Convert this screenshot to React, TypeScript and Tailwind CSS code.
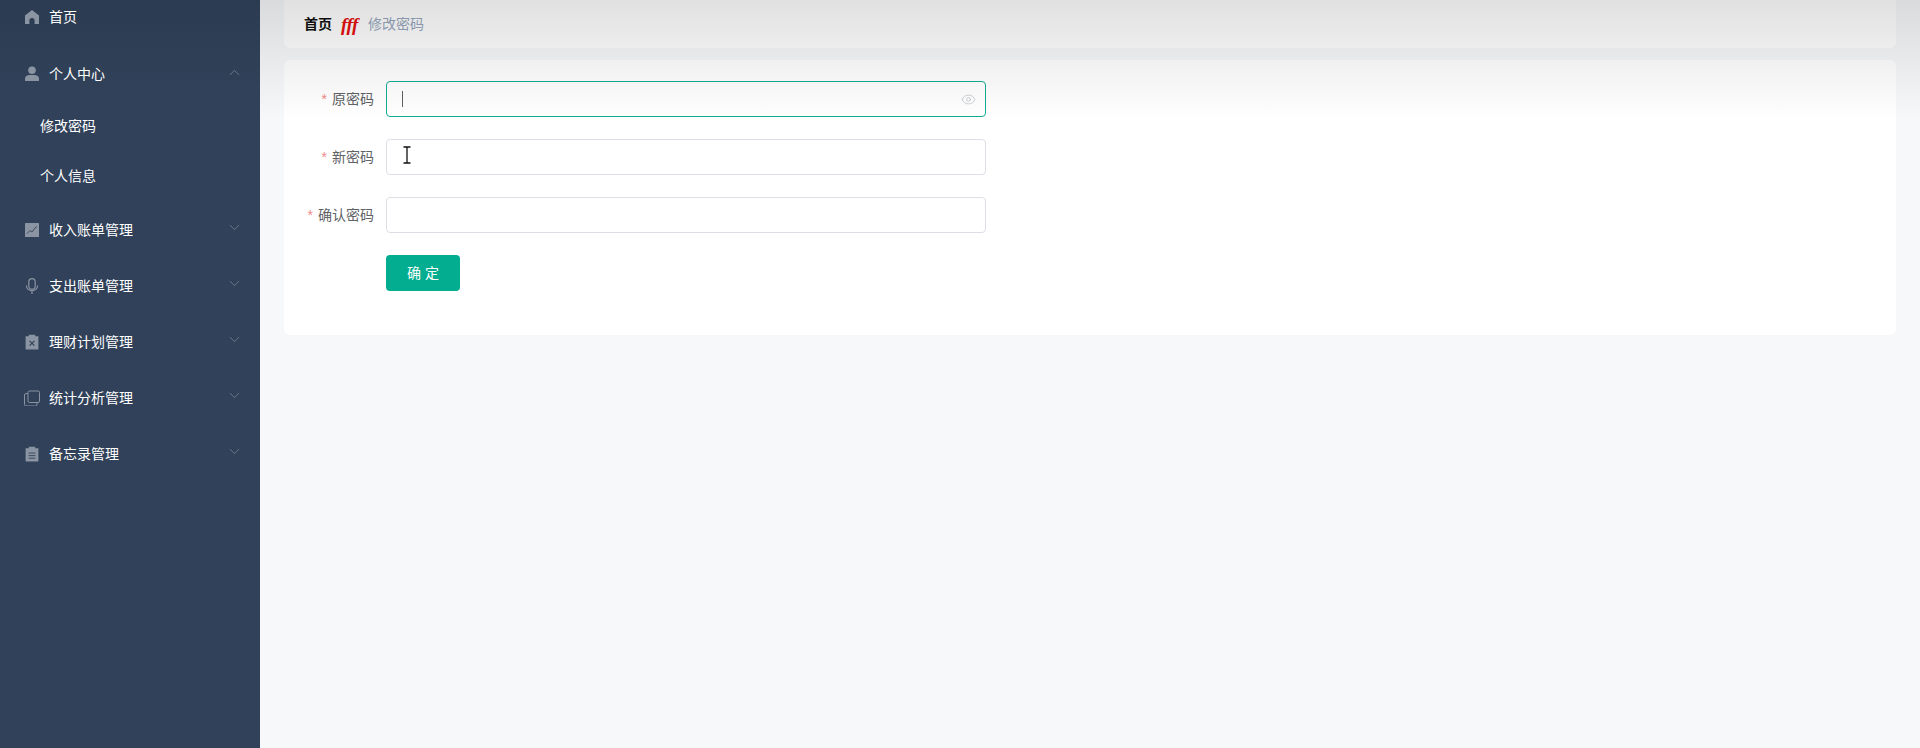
import { ChevronDown, ChevronUp, Eye } from "lucide-react";
import type { ReactNode } from "react";

const font = "font-['Liberation_Sans','Noto_Sans_CJK_SC',sans-serif]";

const HomeIcon = () => (
  <svg viewBox="0 0 16 16" className="h-[16px] w-[16px] fill-[#8a94a3]">
    <path d="M8 1 15 6.6V15h-4.4v-3.4a2.6 2.6 0 0 0-5.2 0V15H1V6.6z" />
  </svg>
);

const UserIcon = () => (
  <svg viewBox="0 0 16 16" className="h-[16px] w-[16px] fill-[#8a94a3]">
    <circle cx="8" cy="4.2" r="3.8" />
    <path d="M1 15v-2.4C1 10.2 3.2 9 5.5 9h5c2.3 0 4.5 1.2 4.5 3.6V15z" />
  </svg>
);

const ChartIcon = () => (
  <svg viewBox="0 0 16 16" className="h-[16px] w-[16px]">
    <rect x="1" y="1" width="14" height="14" rx="0.5" fill="#8a94a3" />
    <path d="M3 11.5 6 8.5l2 1.5 3-4 2-1.5" fill="none" stroke="#3e4c60" strokeWidth="1" />
  </svg>
);

const MicIcon = () => (
  <svg viewBox="0 0 16 16" className="h-[16px] w-[16px] fill-none stroke-[#8a94a3]" strokeWidth="1.2">
    <rect x="4.8" y="0.6" width="6.4" height="10.6" rx="3.2" />
    <path d="M2.4 7.6c0 6.6 11.2 6.6 11.2 0M8 12.6V16" />
  </svg>
);

const ClipboardXIcon = () => (
  <svg viewBox="0 0 16 16" className="h-[16px] w-[16px]">
    <path d="M1.6 2.2h3.2V.8h6.4v1.4h3.2V15.4H1.6z" fill="#8a94a3" />
    <path d="M5.6 6.8 10.4 11.6M10.4 6.8 5.6 11.6" stroke="#34445a" strokeWidth="1.2" />
  </svg>
);

const CopyIcon = () => (
  <svg viewBox="0 0 16 16" className="h-[16px] w-[16px] fill-none stroke-[#8a94a3]" strokeWidth="1">
    <rect x="4" y="1" width="11.5" height="11.5" rx="1.5" />
    <path d="M4 3.6H2A1.5 1.5 0 0 0 .5 5.1v9.4A1.5 1.5 0 0 0 2 16h9.5a1.5 1.5 0 0 0 1.5-1.5v-2" />
  </svg>
);

const NoteIcon = () => (
  <svg viewBox="0 0 16 16" className="h-[16px] w-[16px]">
    <path d="M1.6 2.2h3.2V.8h6.4v1.4h3.2V15.4H1.6z" fill="#8a94a3" />
    <path d="M4.6 7h6.8M4.6 9.6h6.8M4.6 12.2h6.8" stroke="#34445a" strokeWidth="0.9" />
  </svg>
);

function MenuItem({ icon, label, open, arrow = true }: { icon: ReactNode; label: string; open?: boolean; arrow?: boolean }) {
  return (
    <div className="flex h-[56px] items-center pl-[24px] pr-[17px] text-[14px] text-white">
      <span className="mr-[9px] flex w-[16px] justify-center">{icon}</span>
      <span className="flex-1">{label}</span>
      {arrow &&
        (open ? (
          <ChevronUp size={17} strokeWidth={0.9} className="-mt-[3px] text-[#8a94a3]" />
        ) : (
          <ChevronDown size={17} strokeWidth={0.9} className="-mt-[5px] text-[#8a94a3]" />
        ))}
    </div>
  );
}

function SubItem({ label }: { label: string }) {
  return <div className="flex h-[50px] items-center pl-[40px] text-[14px] text-white">{label}</div>;
}

function Field({ label, focused }: { label: string; focused?: boolean }) {
  return (
    <div className="mb-[22px] flex h-[36px] items-center">
      <label className="w-[90px] pr-[12px] text-right text-[14px] text-[#606266]">
        <span className="mr-[5px] text-[#f08a8a]">*</span>
        {label}
      </label>
      <div
        className={
          focused
            ? "flex h-[36px] w-[600px] items-center justify-between rounded-[4px] border border-[#12ad95] bg-white pl-[15px] pr-[9px]"
            : "h-[36px] w-[600px] rounded-[4px] border border-[#dcdfe6] bg-white"
        }
      >
        {focused && (
          <>
            <span className="h-[16px] w-px bg-[#606266]" />
            <Eye size={15} strokeWidth={1.3} className="text-[#c0c4cc]" />
          </>
        )}
      </div>
    </div>
  );
}

export default function App() {
  return (
    <div className={`relative flex h-[748px] overflow-hidden bg-[#f7f8fa] ${font}`}>
      <aside className="relative h-full w-[260px] shrink-0 bg-[#304159]">
        <div className="absolute inset-x-0 top-0 h-[90px] bg-gradient-to-b from-[#1f2a38]/25 to-transparent" />
        <div className="relative -mt-[11px]">
          <div className="mb-px">
            <MenuItem icon={<HomeIcon />} label="首页" arrow={false} />
          </div>
          <MenuItem icon={<UserIcon />} label="个人中心" open />
          <div className="-mt-px mb-px">
            <SubItem label="修改密码" />
            <SubItem label="个人信息" />
          </div>
          <MenuItem icon={<ChartIcon />} label="收入账单管理" />
          <MenuItem icon={<MicIcon />} label="支出账单管理" />
          <MenuItem icon={<ClipboardXIcon />} label="理财计划管理" />
          <MenuItem icon={<CopyIcon />} label="统计分析管理" />
          <MenuItem icon={<NoteIcon />} label="备忘录管理" />
        </div>
      </aside>

      <main className="min-w-0 flex-1 px-[24px]">
        <div className="flex h-[48px] items-center rounded-b-[6px] bg-white pl-[20px] text-[14px]">
          <span className="font-semibold text-[#111]">首页</span>
          <span className="mx-[9px] w-[18px] whitespace-nowrap pt-[1px] font-['Liberation_Serif',serif] text-[19px] font-bold italic leading-none tracking-[-0.5px] text-[#e81010]">
            fff
          </span>
          <span className="text-[#97a8be]">修改密码</span>
        </div>

        <div className="mt-[12px] h-[275px] rounded-[6px] bg-white pl-[12px] pt-[21px]">
          <Field label="原密码" focused />
          <Field label="新密码" />
          <Field label="确认密码" />
          <div className="pl-[90px]">
            <button className="h-[36px] w-[74px] rounded-[4px] bg-[#02ae8f] pl-[4px] text-[14px] tracking-[4px] text-white">
              确定
            </button>
          </div>
        </div>
      </main>

      {/* darkened fade across the top of the page */}
      <div className="pointer-events-none absolute left-[260px] right-0 top-0 h-[120px] bg-gradient-to-b from-[#000000]/12 to-transparent" />

      {/* mouse pointer captured over the new password field */}
      <svg viewBox="0 0 10 18" className="pointer-events-none absolute left-[402px] top-[146px] h-[18px] w-[10px] fill-none stroke-[#111]" strokeWidth="1.3">
        <path d="M1.5 1h7M5 1v16M1.5 17h7" />
      </svg>
    </div>
  );
}
